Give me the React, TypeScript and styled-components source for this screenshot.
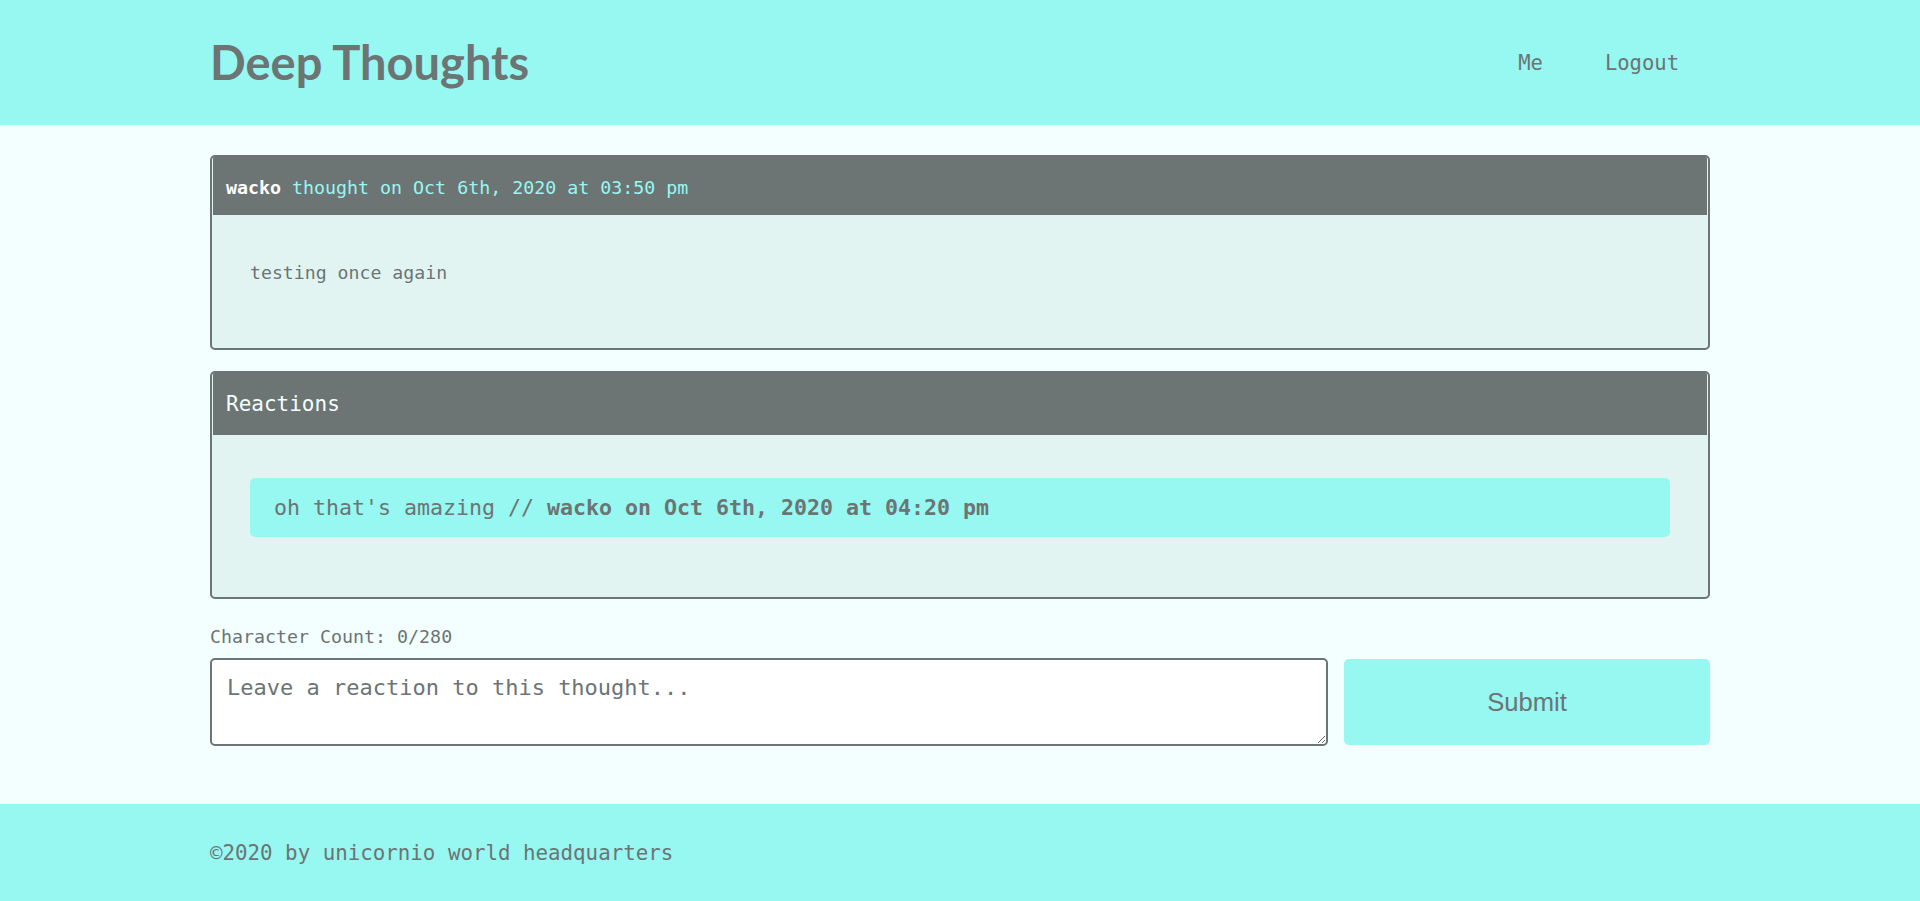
import styled, { createGlobalStyle } from "styled-components";

const GlobalStyle = createGlobalStyle`
	body {
		margin: 0;
		background: #f3fffe;
		color: #6c7474;
		font-family: "DejaVu Sans Mono", monospace;
	}
	* {
		box-sizing: border-box;
	}
`;

const Container = styled.div`
	width: 1500px;
	margin: 0 auto;
`;

const Header = styled.header`
	background: #97f7f1;
	height: 125px;
`;

const HeaderInner = styled(Container)`
	height: 100%;
	display: flex;
	align-items: center;
	justify-content: space-between;
`;

const Title = styled.h1`
	margin: 0;
	font-family: Lato, "Open Sans", sans-serif;
	font-size: 47px;
	font-weight: 700;
	color: #6c7474;
	padding-bottom: 2px;
`;

const Nav = styled.nav`
	display: flex;
	align-items: center;
`;

const NavLink = styled.a`
	margin: 0 31px;
	font-size: 20.5px;
	color: #6c7474;
	text-decoration: none;
	cursor: pointer;
`;

const Main = styled(Container)`
	padding: 30px 0 58px;
`;

const Card = styled.section`
	border: 2px solid #6c7474;
	border-radius: 5px;
	background: #e1f4f2;
	overflow: hidden;

	& + & {
		margin-top: 21px;
	}
`;

const CardHeader = styled.div<{ large?: boolean }>`
	background: #6c7474;
	margin: 0 1px;
	padding: ${(props) => (props.large ? "16px 13px" : "18px 13px 14px")};
	font-size: ${(props) => (props.large ? "21px" : "18.3px")};
	line-height: ${(props) => (props.large ? "30px" : "26px")};
	color: ${(props) => (props.large ? "#f3fffe" : "#97f7f1")};
`;

const Author = styled.strong`
	color: #ffffff;
	font-weight: 700;
`;

const CardBody = styled.div`
	padding: 43px 38px 60px;
`;

const ThoughtText = styled.p`
	margin: -1px 0 0;
	font-size: 18.2px;
	line-height: 31px;
`;

const Reaction = styled.p`
	margin: 0;
	background: #97f7f1;
	border-radius: 5px;
	padding: 14.5px 24px;
	font-size: 21.6px;
	line-height: 30px;

	strong {
		font-weight: 700;
	}
`;

const CountLabel = styled.p`
	margin: 27px 0 10px;
	font-size: 18.3px;
	line-height: 22px;
`;

const Form = styled.form`
	display: grid;
	grid-template-columns: 1fr 366px;
	gap: 16px;
	align-items: start;
`;

const TextArea = styled.textarea`
	display: block;
	width: 100%;
	height: 88px;
	border: 2px solid #6c7474;
	border-radius: 5px;
	background: #ffffff;
	padding: 14px 15px;
	font-family: "DejaVu Sans Mono", monospace;
	font-size: 22px;
	line-height: 28px;
	color: #6c7474;
	resize: vertical;

	&::placeholder {
		color: #6c7474;
		opacity: 1;
	}
`;

const SubmitButton = styled.button`
	margin-top: 1px;
	height: 86px;
	border: none;
	border-radius: 5px;
	background: #97f7f1;
	color: #6c7474;
	font-family: "Liberation Sans", Arial, sans-serif;
	font-size: 25.6px;
	cursor: pointer;
`;

const Footer = styled.footer`
	background: #97f7f1;
	padding: 34px 0;
`;

const FooterText = styled.p`
	margin: 0;
	font-size: 20.8px;
	line-height: 30px;
`;

const App = () => (
	<>
		<GlobalStyle />
		<Header>
			<HeaderInner>
				<Title>Deep Thoughts</Title>
				<Nav>
					<NavLink>Me</NavLink>
					<NavLink>Logout</NavLink>
				</Nav>
			</HeaderInner>
		</Header>
		<Main>
			<Card>
				<CardHeader>
					<Author>wacko</Author> thought on Oct 6th, 2020 at 03:50 pm
				</CardHeader>
				<CardBody>
					<ThoughtText>testing once again</ThoughtText>
				</CardBody>
			</Card>
			<Card>
				<CardHeader large>Reactions</CardHeader>
				<CardBody>
					<Reaction>
						oh that's amazing // <strong>wacko on Oct 6th, 2020 at 04:20 pm</strong>
					</Reaction>
				</CardBody>
			</Card>
			<CountLabel>Character Count: 0/280</CountLabel>
			<Form onSubmit={(e) => e.preventDefault()}>
				<TextArea placeholder="Leave a reaction to this thought..." />
				<SubmitButton type="submit">Submit</SubmitButton>
			</Form>
		</Main>
		<Footer>
			<Container>
				<FooterText>©2020 by unicornio world headquarters</FooterText>
			</Container>
		</Footer>
	</>
);

export default App;
